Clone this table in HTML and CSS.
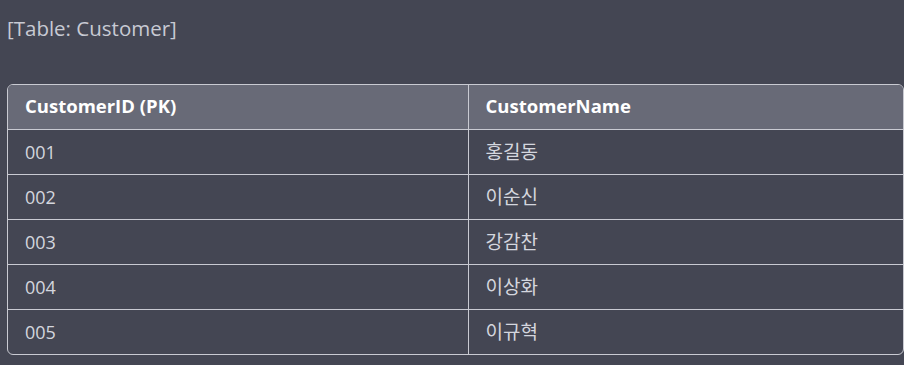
FILE: index.html
```html
<!DOCTYPE html>
<html lang="ko">
<head>
<meta charset="utf-8">
<link rel="stylesheet" href="styles.css">
</head>
<body>
<p class="title">[Table: Customer]</p>
<div class="table-wrap">
  <table class="data">
    <thead>
      <tr><th class="c1">CustomerID (PK)</th><th>CustomerName</th></tr>
    </thead>
    <tbody>
      <tr><td class="c1">001</td><td class="name">홍길동</td></tr>
      <tr><td class="c1">002</td><td class="name">이순신</td></tr>
      <tr><td class="c1">003</td><td class="name">강감찬</td></tr>
      <tr><td class="c1">004</td><td class="name">이상화</td></tr>
      <tr><td class="c1">005</td><td class="name">이규혁</td></tr>
    </tbody>
  </table>
</div>
</body>
</html>
```

FILE: styles.css
```css
html, body {
  margin: 0;
  padding: 0;
  background: #444653;
}
body {
  padding: 0 0 0 7px;
  font-family: "Open Sans", "Noto Sans CJK KR", sans-serif;
  color: #d4d6de;
}
.title {
  margin: 0;
  padding-top: 13px;
  font-size: 20.5px;
  line-height: 30px;
  color: #c8cad3;
  height: 71px;
}
.table-wrap {
  border: 1px solid #c9cad2;
  border-radius: 6px;
  overflow: hidden;
}
.data {
  width: 100%;
  border-collapse: collapse;
  font-size: 18px;
}
.data th, .data td {
  padding: 0 0 0 17px;
  text-align: left;
  vertical-align: middle;
  box-sizing: border-box;
}
.data th {
  height: 44px;
  padding-bottom: 2px;
  background: #686a77;
  color: #ffffff;
  font-weight: 700;
  font-size: 18.5px;
  border-bottom: 1px solid #c9cad2;
}
.data td {
  height: 45px;
  line-height: 24px;
  border-top: 1px solid #c9cad2;
  color: #d4d6de;
}
.data td.name {
  font-size: 19px;
}
.data tbody tr:first-child td {
  border-top: none;
}
.data .c1 {
  width: 460px;
  border-right: 1px solid #c9cad2;
}
```
